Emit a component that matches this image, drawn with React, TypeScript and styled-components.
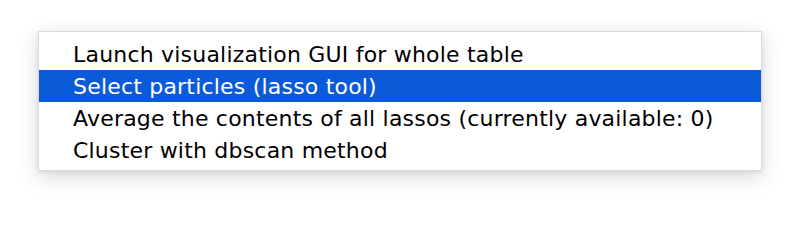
import React from "react";
import styled, { createGlobalStyle } from "styled-components";

const Global = createGlobalStyle`
  html, body { margin: 0; padding: 0; background: #ffffff; }
  body { width: 800px; height: 216px; overflow: hidden; }
`;

const Stage = styled.div`
  width: 800px;
  height: 216px;
  padding: 31px 38px 0 38px;
  box-sizing: border-box;
`;

const Menu = styled.ul`
  list-style: none;
  margin: 0;
  width: 724px;
  box-sizing: border-box;
  padding: 6px 0 4px 0;
  background: #ffffff;
  border: 1px solid rgba(0, 0, 0, 0.14);
  box-shadow: 0 6px 20px rgba(0, 0, 0, 0.16), 0 1px 4px rgba(0, 0, 0, 0.08);
  font-family: "DejaVu Sans", "Noto Sans", sans-serif;
  font-size: 22px;
  letter-spacing: 0.2px;
`;

const Item = styled.li<{ $active?: boolean }>`
  display: flex;
  align-items: center;
  height: 32px;
  padding: 0 0 0 34px;
  color: ${(p) => (p.$active ? "#ffffff" : "#000000")};
  background: ${(p) => (p.$active ? "#0b5ad9" : "transparent")};
  white-space: nowrap;
  cursor: default;
`;

const items = [
  "Launch visualization GUI for whole table",
  "Select particles (lasso tool)",
  "Average the contents of all lassos (currently available: 0)",
  "Cluster with dbscan method",
];

export default function App() {
  return (
    <>
      <Global />
      <Stage>
        <Menu>
          {items.map((t, i) => (
            <Item key={t} $active={i === 1}>
              {t}
            </Item>
          ))}
        </Menu>
      </Stage>
    </>
  );
}
